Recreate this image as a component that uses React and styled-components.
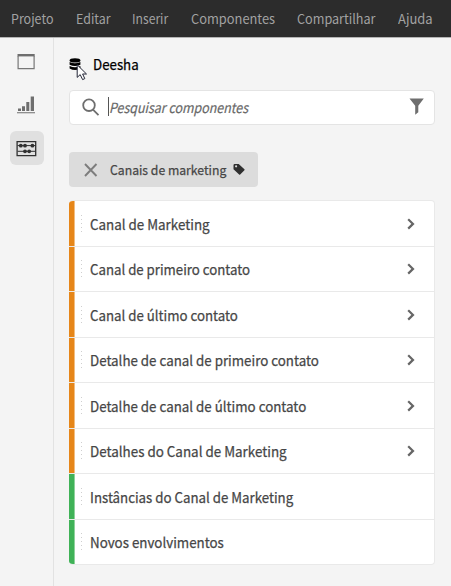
import React from 'react';
import styled, { createGlobalStyle } from 'styled-components';

const GlobalStyle = createGlobalStyle`
  * { box-sizing: border-box; }
  body {
    margin: 0;
    background: #f4f4f4;
    font-family: "Noto Sans CJK SC", "Noto Sans", sans-serif;
    color: #464646;
  }
`;

const Page = styled.div`
  display: flex;
  flex-direction: column;
  width: 451px;
  height: 586px;
  overflow: hidden;
`;

const MenuBar = styled.nav`
  display: flex;
  flex: none;
  height: 38px;
  padding-left: 11px;
  background: #2c2c2c;
  border-bottom: 1px solid #b4b4b4;
`;

/* Slightly condensed text, anchored at its left edge. */
const Condensed = styled.span`
  white-space: nowrap;
  transform: scaleX(${(p) => p.$scale || 1});
  transform-origin: 0 50%;
`;

const MenuItem = styled(Condensed)`
  flex: none;
  width: ${(p) => p.$width}px;
  font-size: 13.5px;
  line-height: 36px;
  color: #a2a2a2;
`;

const Body = styled.div`
  display: flex;
  flex: 1;
`;

const Rail = styled.aside`
  display: flex;
  flex-direction: column;
  gap: 9px;
  width: 54px;
  padding: 7px 0 0 10px;
  border-right: 1px solid #e2e2e2;
`;

const RailButton = styled.div`
  width: 34px;
  height: 34px;
  border-radius: 6px;
  background: ${(p) => (p.$active ? '#e0e0e0' : 'transparent')};
  svg { display: block; }
`;

const Panel = styled.main`
  width: 381px;
  padding: 16px 0 0 15px;
`;

const Source = styled.header`
  display: flex;
  height: 22px;
  svg { flex: none; overflow: visible; }
`;

const SourceName = styled(Condensed)`
  margin-left: 4px;
  font-size: 14px;
  line-height: 21px;
  -webkit-text-stroke: 0.25px #000;
  color: #000;
`;

const SearchBox = styled.div`
  display: flex;
  align-items: center;
  width: 366px;
  height: 35px;
  margin-top: 14px;
  padding: 0 9px 0 12px;
  background: #fff;
  border: 1px solid #e4e4e4;
  border-radius: 4px;
`;

const Caret = styled.span`
  width: 1px;
  height: 19px;
  margin: -3px 0 0 7px;
  background: #555;
`;

const Placeholder = styled(Condensed)`
  flex: none;
  width: 300px;
  font-size: 14px;
  line-height: 32px;
  margin-top: -2px;
  font-style: italic;
  -webkit-text-stroke: 0.2px #686868;
  color: #686868;
`;

const Chip = styled.div`
  display: flex;
  align-items: center;
  width: 189px;
  height: 35px;
  margin-top: 27px;
  padding-left: 15px;
  border-radius: 4px;
  background: #dcdcdc;
`;

const ChipLabel = styled(Condensed)`
  width: 117px;
  margin: 0 6px 0 12px;
  font-size: 13px;
  line-height: 34px;
  -webkit-text-stroke: 0.25px #464646;
`;

const List = styled.div`
  width: 366px;
  margin-top: 13px;
  border: 1px solid #e9e9e9;
  border-left: 0;
  border-radius: 4px;
  background: #fff;
  overflow: hidden;
`;

const Row = styled.div`
  display: flex;
  align-items: center;
  height: 45.5px;
  padding-right: 19px;
  border-bottom: 1px solid #e9e9e9;
  svg { flex: none; margin-top: 1px; }
  &:last-child { height: 44.5px; border-bottom: 0; }
`;

const Stripe = styled.span`
  flex: none;
  align-self: stretch;
  width: 6px;
  background: ${(p) => p.$color};
  border-right: 1px solid ${(p) => p.$edge};
`;

const Grip = styled.span`
  display: flex;
  flex: none;
  flex-direction: column;
  justify-content: space-between;
  width: 1px;
  height: 17px;
  margin: 0 8px 0 6px;
  i { height: 1px; background: #cfcfcf; }
`;

const RowLabel = styled(Condensed)`
  flex: none;
  width: 317px;
  font-size: 14px;
  line-height: 44px;
  padding-top: 1px;
  -webkit-text-stroke: 0.25px #464646;
`;

const WindowIcon = () => (
  <svg width="34" height="34" fill="none">
    <path d="M8.1 11v12.6h16V11" stroke="#777" strokeWidth="1.2" />
    <path d="M7.5 10.2h17.2" stroke="#6e6e6e" strokeWidth="2.4" />
  </svg>
);

const ChartIcon = () => (
  <svg width="34" height="34" fill="#6e6e6e">
    <path d="M8 20.5h3V23H8zM12 18.3h3V23h-3zM16.3 14h3v9h-3zM20.7 8.5h3.3V23h-3.3zM7 24.2h18v1H7z" />
  </svg>
);

const AbacusIcon = () => (
  <svg width="34" height="34" fill="#303030">
    <path d="M7.1 10.7h18.6v14H7.1z" fill="none" stroke="#303030" strokeWidth="1.3" />
    <path d="M7.5 14.6h18M7.5 20.3h18" stroke="#303030" />
    <circle cx="10.8" cy="14.7" r="1.9" />
    <circle cx="15" cy="14.7" r="1.9" />
    <circle cx="22.4" cy="14.7" r="1.9" />
    <circle cx="15" cy="20.3" r="1.9" />
    <circle cx="19.2" cy="20.3" r="1.9" />
  </svg>
);

const DatabaseIcon = () => (
  <svg width="20" height="26">
    <ellipse cx="6" cy="6.4" rx="5.4" ry="2.1" />
    <path d="M.6 8q5.4 2.6 10.8 0v2.7q-5.4 2.5-10.8 0zM.6 12q5.4 2.6 10.8 0v2.4q-5.4 3-10.8 0z" />
    <path d="M8.2 10.8v12.6l3-2.8 2.4 5 2.2-1-2.2-4.6h3.9z" fill="#fff" stroke="#222536" strokeWidth="1" />
  </svg>
);

const SearchIcon = () => (
  <svg width="19" height="19" fill="none" stroke="#6e6e6e" strokeWidth="1.8">
    <circle cx="7" cy="7.2" r="5.8" />
    <path d="m11 11.6 5.5 5.5" />
  </svg>
);

const FilterIcon = () => (
  <svg width="16" height="19" fill="#6e6e6e">
    <path d="M.5 .5h14.3L9.3 7.7v6.6L6.2 16.8V7.7z" />
  </svg>
);

const CloseIcon = () => (
  <svg width="14" height="14" stroke="#7d7d7d" strokeWidth="1.9">
    <path d="m1 1 11.5 12M12.5 1 1 13" />
  </svg>
);

const TagIcon = () => (
  <svg width="12" height="13" fill="#303030">
    <path fillRule="evenodd" d="M.5 2.2Q.5 1 1.7 1h4L11.4 6.3q.5.5 0 1L7.2 11.6q-.6.5-1.1 0L.5 6.2zM2 3.3a1.1 1.1 0 1 0 2.2 0 1.1 1.1 0 1 0-2.2 0z" />
  </svg>
);

const ChevronIcon = () => (
  <svg width="8" height="12" fill="none" stroke="#666" strokeWidth="2.2">
    <path d="m1.2 1.2 4.8 4.7-4.8 4.7" />
  </svg>
);

const menu = [
  ['Projeto', 65, 0.925],
  ['Editar', 56, 0.92],
  ['Inserir', 59, 0.9],
  ['Componentes', 106, 0.95],
  ['Compartilhar', 101, 0.935],
  ['Ajuda', 40, 0.96],
];

const ORANGE = ['#e68619', '#f2bd80'];
const GREEN = ['#3fb257', '#8fd29c'];

const components = [
  ['Canal de Marketing', ORANGE, true, 0.955],
  ['Canal de primeiro contato', ORANGE, true, 0.945],
  ['Canal de último contato', ORANGE, true, 0.947],
  ['Detalhe de canal de primeiro contato', ORANGE, true, 0.952],
  ['Detalhe de canal de último contato', ORANGE, true, 0.952],
  ['Detalhes do Canal de Marketing', ORANGE, true, 0.957],
  ['Instâncias do Canal de Marketing', GREEN, false, 0.948],
  ['Novos envolvimentos', GREEN, false, 0.953],
];

export default function App() {
  return (
    <Page>
      <GlobalStyle />
      <MenuBar>
        {menu.map(([label, width, scale]) => (
          <MenuItem key={label} $width={width} $scale={scale}>{label}</MenuItem>
        ))}
      </MenuBar>
      <Body>
        <Rail>
          <RailButton><WindowIcon /></RailButton>
          <RailButton><ChartIcon /></RailButton>
          <RailButton $active><AbacusIcon /></RailButton>
        </Rail>
        <Panel>
          <Source>
            <DatabaseIcon />
            <SourceName $scale={0.95}>Deesha</SourceName>
          </Source>
          <SearchBox>
            <SearchIcon />
            <Caret />
            <Placeholder $scale={0.889}>Pesquisar componentes</Placeholder>
            <FilterIcon />
          </SearchBox>
          <Chip>
            <CloseIcon />
            <ChipLabel $scale={0.94}>Canais de marketing</ChipLabel>
            <TagIcon />
          </Chip>
          <List>
            {components.map(([label, [color, edge], expandable, scale]) => (
              <Row key={label}>
                <Stripe $color={color} $edge={edge} />
                <Grip><i /><i /><i /><i /><i /></Grip>
                <RowLabel $scale={scale}>{label}</RowLabel>
                {expandable && <ChevronIcon />}
              </Row>
            ))}
          </List>
        </Panel>
      </Body>
    </Page>
  );
}
